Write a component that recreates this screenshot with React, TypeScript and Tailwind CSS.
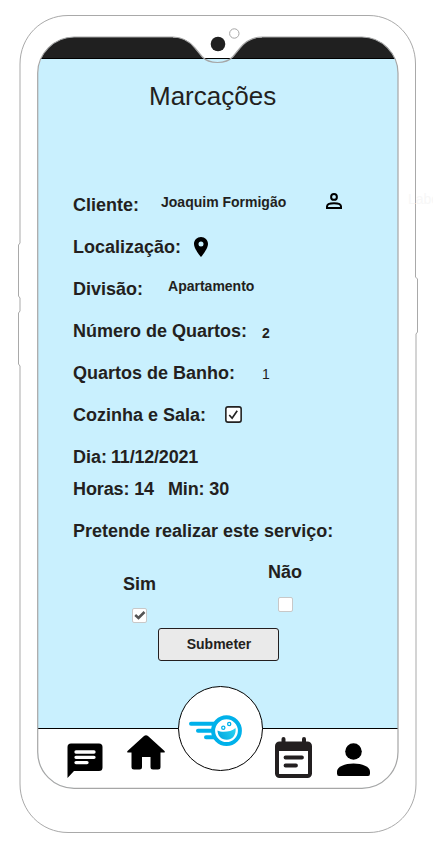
import React from "react";

function PhoneFrame() {
  return (
    <svg className="pointer-events-none absolute left-0 top-0" width="433" height="852" viewBox="0 0 433 852" fill="none">
      <path d="M173 36V37.500C184 37.500 190 42 195 48L203 58H232L240 48C245 42 251 37.500 262 37.500V36Z" fill="#fff" />
      <path d="M41 58.5H395" stroke="#000" />
      <path
        d="M74 37H173C184 37 190 42 195 48L202 56.500C206 61 211 62.500 217.500 62.500C224 62.500 229 61 233 56.500L240 48C245 42 251 37 262 37H362C382 37 398 54 398 73V752C398 772 382 788.300 362 788.300H74C54 788.300 37.700 772 37.700 752V73C37.700 54 54 37 74 37Z"
        stroke="#a6a6a6" strokeWidth="1.2"
      />
      <path
        d="M68 15.500H369C395 15.500 415.500 37 415.500 64V277L417.500 279V332L416 334V784C416 811 395 832.500 369 832.500H68C41 832.500 20 811 20 784V366L18.500 364V313L20 311V298L18.500 296V245L20 243V64C20 37 41 15.500 68 15.500Z"
        stroke="#a9a9a9"
      />
      <circle cx="218" cy="44" r="7.300" fill="#202020" />
      <circle cx="234.300" cy="33.500" r="4.700" stroke="#a6a6a6" fill="#fff" />
    </svg>
  );
}

function Row({ label, children }: { label: React.ReactNode; children?: React.ReactNode }) {
  return (
    <div className="flex h-[42px] items-center">
      <span>{label}</span>
      {children}
    </div>
  );
}

function Logo() {
  return (
    <svg width="54" height="34" viewBox="0 0 54 34" fill="none">
      <defs>
        <linearGradient id="smile" x1="28" y1="24" x2="46" y2="14" gradientUnits="userSpaceOnUse">
          <stop stopColor="#00a5df" />
          <stop offset="1" stopColor="#28d3f2" />
        </linearGradient>
      </defs>
      <path d="M2 9.700H30M9 16.700H26M17 23.200H29" stroke="#00b1ea" strokeWidth="4" strokeLinecap="round" />
      <circle cx="37.500" cy="16.700" r="13.400" fill="#fff" stroke="#00b1ea" strokeWidth="4" />
      <path d="M28.500 16.500C33 19 42 18 46.500 14C47.500 20 44 25.800 37.800 25.800C32 25.800 28.500 21.500 28.500 16.500Z" fill="url(#smile)" />
      <circle cx="34.300" cy="13.700" r="1.600" stroke="#00b1ea" strokeWidth="1.300" />
      <circle cx="40.200" cy="10" r="1.600" stroke="#00b1ea" strokeWidth="1.300" />
    </svg>
  );
}

function BottomNav() {
  return (
    <nav className="flex h-[59px] w-full items-start">
      <svg className="ml-[29px] mt-[14px]" width="36" height="36" viewBox="0 0 36 36">
        <path d="M4 .5H32Q35.500 .5 35.500 4V24.500Q35.500 28 32 28H7L0.500 35V4Q0.500 .5 4 .5Z" fill="#000" />
        <path d="M9 9H27M9 14.300H27M9 19.600H20" stroke="#fff" strokeWidth="3.300" strokeLinecap="round" />
      </svg>
      <svg className="ml-[24px] mt-[6px]" width="39" height="35" viewBox="0 0 39 35">
        <path d="M17 1Q19-.7 21 1L37.500 16Q38.500 17.600 36.500 17.600H33.500V32Q33.500 34.500 31 34.500H26Q23.500 34.500 23.500 32V22H15V32Q15 34.500 12.500 34.500H7Q4.500 34.500 4.500 32V17.600H1.500Q-.5 17.600 .5 16Z" />
      </svg>
      <div className="-mt-[43px] ml-[12px] flex size-[85px] shrink-0 items-center justify-center rounded-full border border-black bg-white">
        <div className="-ml-[9px] mt-[4px]"><Logo /></div>
      </div>
      <svg className="ml-[12px] mt-[8px]" width="37" height="41" viewBox="0 0 37 41" fill="none">
        <path d="M8.500 2V8M29 2V8" stroke="#231f20" strokeWidth="4" strokeLinecap="round" />
        <rect x="2" y="6.500" width="33" height="32.500" rx="2.500" stroke="#231f20" strokeWidth="4" />
        <path d="M2 6H35V14H2Z" fill="#231f20" />
        <path d="M10.500 20.500H27M10.500 28.500H21" stroke="#231f20" strokeWidth="3.800" strokeLinecap="round" />
      </svg>
      <svg className="ml-[25px] mt-[14px]" width="33" height="34" viewBox="0 0 33 34">
        <circle cx="16.500" cy="8.500" r="8.300" />
        <path d="M0 28.500C0 23.500 8 20.500 16.500 20.500S33 23.500 33 28.500V30.500Q33 33 31 33H2Q0 33 0 30.500Z" />
      </svg>
    </nav>
  );
}

export default function App() {
  return (
    <div className="relative flex h-[852px] w-[433px] flex-col overflow-hidden bg-white pl-[38px] pt-[37px] font-['Liberation_Sans',Arial,sans-serif] whitespace-nowrap text-[#231f20]">
      <main className="flex h-[751px] w-[360px] flex-col overflow-hidden rounded-[36px] bg-[#c9f0fe]">
        <div className="h-[21px] shrink-0 bg-[#202020]" />
        <h1 className="mt-[23px] h-[30px] pl-[111px] text-[26px] leading-[30px]">Marcações</h1>
        <form className="mt-[73px] flex h-[486px] flex-col pl-[35px] text-[18px] font-bold">
          <Row label="Cliente:">
            <span className="-mt-[5px] ml-[22px] text-[14px]">Joaquim Formigão</span>
            <svg className="-mt-[9px] ml-[40px]" width="16" height="16" viewBox="0 0 16 16" fill="none" stroke="#000" strokeWidth="2">
              <circle cx="8" cy="3.900" r="2.900" />
              <path d="M1 14.900V13.500C1 11.300 4.500 10.200 8 10.200S15 11.300 15 13.500V14.900Z" />
            </svg>
          </Row>
          <Row label="Localização:">
            <svg className="ml-[13px]" width="14" height="20" viewBox="0 0 14 20">
              <path fillRule="evenodd" d="M7 0C3.100 0 0 3.100 0 7C0 12 7 20 7 20S14 12 14 7C14 3.100 10.900 0 7 0ZM7 4.500A2.500 2.500 0 1 1 7 9.500A2.500 2.500 0 1 1 7 4.500Z" />
            </svg>
          </Row>
          <Row label="Divisão:">
            <span className="-mt-[5px] ml-[25px] text-[14px]">Apartamento</span>
          </Row>
          <Row label="Número de Quartos:">
            <span className="ml-[15px] mt-[4px] text-[14px]">2</span>
          </Row>
          <Row label="Quartos de Banho:">
            <span className="ml-[27px] mt-[2px] text-[14px] font-normal">1</span>
          </Row>
          <Row label="Cozinha e Sala:">
            <svg className="ml-[19px] -mt-[2px]" width="17" height="17" viewBox="0 0 16 16" fill="none">
              <rect x=".8" y=".8" width="14.400" height="14.400" rx="2" fill="#fff" stroke="#222" strokeWidth="1.500" />
              <path d="M4 8.500L6.700 11.500L11.500 4.500" stroke="#222" strokeWidth="1.600" />
            </svg>
          </Row>
          <Row label={<>Dia: <span className="-ml-px tracking-[-0.2px]">11/12/2021</span></>} />
          <div className="-mt-[5px] flex h-[32px] items-center tracking-[-0.12px]">
            <span>Horas: 14</span><span className="ml-[14px]">Min: 30</span>
          </div>
          <div className="mt-[5px]"><Row label="Pretende realizar este serviço:" /></div>
          <div className="flex h-[76px] items-start">
            <div className="ml-[50px] mt-[22px] flex w-[33px] flex-col items-center">
              <span className="leading-[20px]">Sim</span>
              <span className="mt-[14px] flex size-[15px] items-center justify-center rounded-[2px] border border-[#c8c8c8] bg-white">
                <svg width="12" height="9" viewBox="0 0 12 9" fill="none"><path d="M1.200 4L4.500 7L10.500 1" stroke="#555" strokeWidth="2.500" /></svg>
              </span>
            </div>
            <div className="ml-[112px] mt-[10px] flex w-[34px] flex-col items-center">
              <span className="leading-[20px]">Não</span>
              <span className="mt-[15px] size-[15px] rounded-[2px] border border-[#c8c8c8] bg-white" />
            </div>
          </div>
          <button type="button" className="ml-[85px] h-[33px] w-[121px] shrink-0 rounded-[3px] border border-[#231f20] bg-[#eaeaea] pl-px text-[14px]">Submeter</button>
        </form>
        <div className="mt-auto border-t border-black bg-white">
          <BottomNav />
        </div>
      </main>
      <PhoneFrame />
      <span className="absolute left-[408px] top-[191px] text-[14px] leading-4 text-[#f7f7f7]">Label</span>
    </div>
  );
}
